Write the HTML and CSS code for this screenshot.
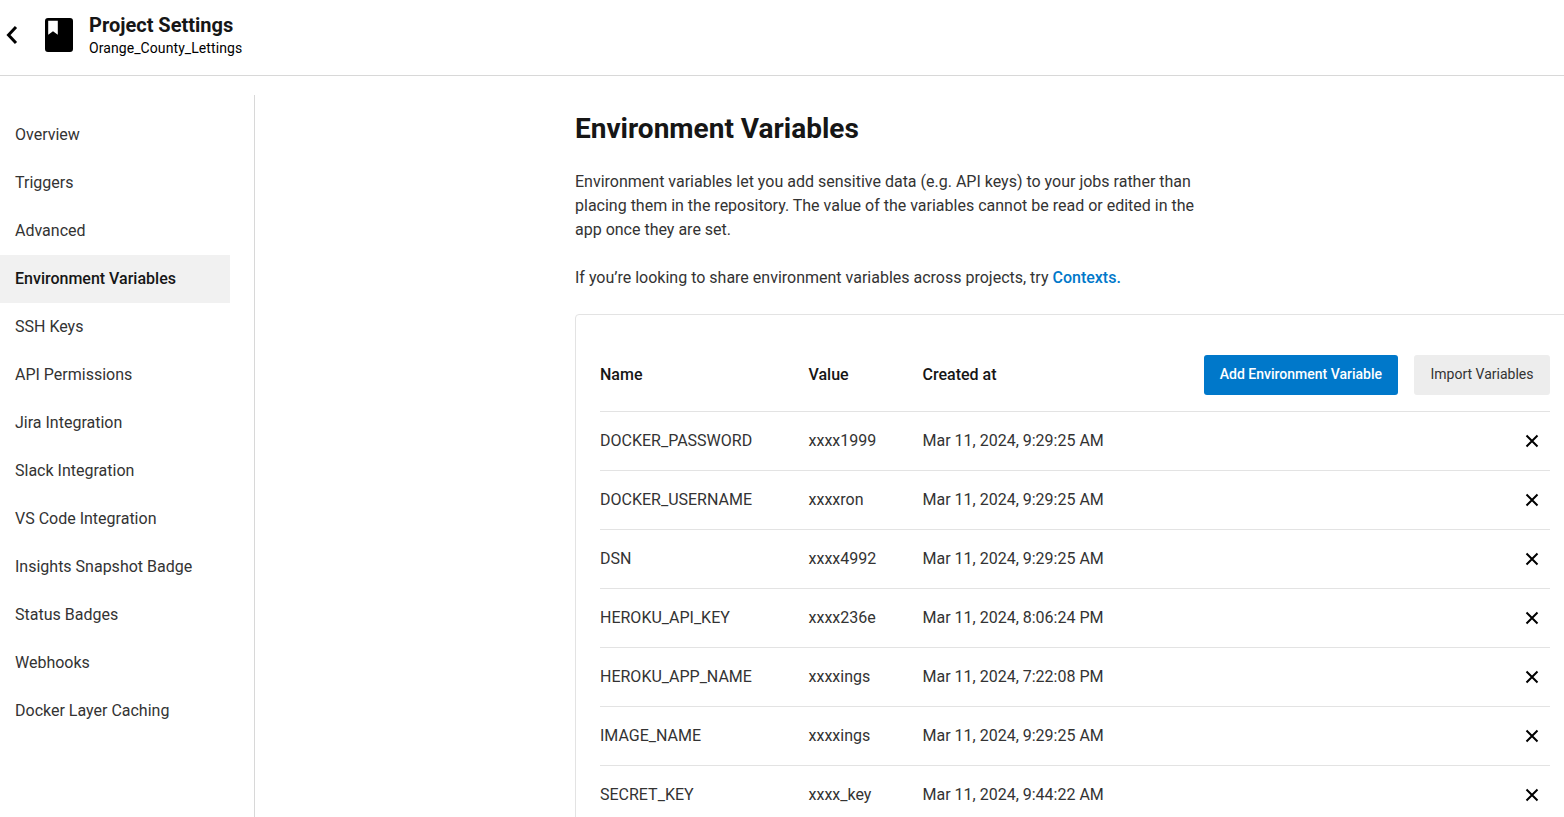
FILE: index.html
```html
<!DOCTYPE html>
<html lang="en">
<head>
    <meta charset="UTF-8">
    <meta name="viewport" content="width=device-width, initial-scale=1.0">
    <title>Project Settings</title>
    <link rel="stylesheet" href="styles.css">
</head>
<body>
    <header class="top-bar">
        <svg class="back-icon" width="14" height="20" viewBox="0 0 14 20"><path d="M11 2 3.5 10 11 18" fill="none" stroke="#000" stroke-width="3"/></svg>
        <svg class="project-icon" width="28" height="34" viewBox="0 0 28 34"><path d="M3 0h22a3 3 0 0 1 3 3v28a3 3 0 0 1-3 3H3a3 3 0 0 1-3-3V3a3 3 0 0 1 3-3ZM3.2 2.7v14l4.8-3.4 4.8 3.4v-14Z" fill="#000" fill-rule="evenodd"/></svg>
        <div class="project-title">
            <h1>Project Settings</h1>
            <div class="project-name">Orange_County_Lettings</div>
        </div>
    </header>

    <div class="page-body">
        <nav class="side-nav">
            <a class="nav-item">Overview</a>
            <a class="nav-item">Triggers</a>
            <a class="nav-item">Advanced</a>
            <a class="nav-item active">Environment Variables</a>
            <a class="nav-item">SSH Keys</a>
            <a class="nav-item">API Permissions</a>
            <a class="nav-item">Jira Integration</a>
            <a class="nav-item">Slack Integration</a>
            <a class="nav-item">VS Code Integration</a>
            <a class="nav-item">Insights Snapshot Badge</a>
            <a class="nav-item">Status Badges</a>
            <a class="nav-item">Webhooks</a>
            <a class="nav-item">Docker Layer Caching</a>
        </nav>

        <main class="content">
            <h2>Environment Variables</h2>
            <p class="intro">Environment variables let you add sensitive data (e.g. API keys) to your jobs rather than placing them in the repository. The value of the variables cannot be read or edited in the app once they are set.</p>
            <p class="intro">If you’re looking to share environment variables across projects, try <a class="link">Contexts.</a></p>

            <section class="var-card">
                <div class="var-head">
                    <span class="col-name">Name</span>
                    <span class="col-value">Value</span>
                    <span class="col-created">Created at</span>
                    <div class="head-buttons">
                        <button class="btn btn-primary">Add Environment Variable</button>
                        <button class="btn btn-secondary">Import Variables</button>
                    </div>
                </div>

                <div class="var-row">
                    <span class="col-name">DOCKER_PASSWORD</span>
                    <span class="col-value">xxxx1999</span>
                    <span class="col-created">Mar 11, 2024, 9:29:25 AM</span>
                    <svg class="del-icon" width="14" height="14" viewBox="0 0 14 14"><path d="M1.5 1.5l11 11M12.5 1.5l-11 11" stroke="#000" stroke-width="2"/></svg>
                </div>
                <div class="var-row">
                    <span class="col-name">DOCKER_USERNAME</span>
                    <span class="col-value">xxxxron</span>
                    <span class="col-created">Mar 11, 2024, 9:29:25 AM</span>
                    <svg class="del-icon" width="14" height="14" viewBox="0 0 14 14"><path d="M1.5 1.5l11 11M12.5 1.5l-11 11" stroke="#000" stroke-width="2"/></svg>
                </div>
                <div class="var-row">
                    <span class="col-name">DSN</span>
                    <span class="col-value">xxxx4992</span>
                    <span class="col-created">Mar 11, 2024, 9:29:25 AM</span>
                    <svg class="del-icon" width="14" height="14" viewBox="0 0 14 14"><path d="M1.5 1.5l11 11M12.5 1.5l-11 11" stroke="#000" stroke-width="2"/></svg>
                </div>
                <div class="var-row">
                    <span class="col-name">HEROKU_API_KEY</span>
                    <span class="col-value">xxxx236e</span>
                    <span class="col-created">Mar 11, 2024, 8:06:24 PM</span>
                    <svg class="del-icon" width="14" height="14" viewBox="0 0 14 14"><path d="M1.5 1.5l11 11M12.5 1.5l-11 11" stroke="#000" stroke-width="2"/></svg>
                </div>
                <div class="var-row">
                    <span class="col-name">HEROKU_APP_NAME</span>
                    <span class="col-value">xxxxings</span>
                    <span class="col-created">Mar 11, 2024, 7:22:08 PM</span>
                    <svg class="del-icon" width="14" height="14" viewBox="0 0 14 14"><path d="M1.5 1.5l11 11M12.5 1.5l-11 11" stroke="#000" stroke-width="2"/></svg>
                </div>
                <div class="var-row">
                    <span class="col-name">IMAGE_NAME</span>
                    <span class="col-value">xxxxings</span>
                    <span class="col-created">Mar 11, 2024, 9:29:25 AM</span>
                    <svg class="del-icon" width="14" height="14" viewBox="0 0 14 14"><path d="M1.5 1.5l11 11M12.5 1.5l-11 11" stroke="#000" stroke-width="2"/></svg>
                </div>
                <div class="var-row">
                    <span class="col-name">SECRET_KEY</span>
                    <span class="col-value">xxxx_key</span>
                    <span class="col-created">Mar 11, 2024, 9:44:22 AM</span>
                    <svg class="del-icon" width="14" height="14" viewBox="0 0 14 14"><path d="M1.5 1.5l11 11M12.5 1.5l-11 11" stroke="#000" stroke-width="2"/></svg>
                </div>
            </section>
        </main>
    </div>
</body>
</html>
```

FILE: styles.css
```css
html, body {
    height: 100%;
}

body {
    margin: 0;
    overflow: hidden;
    background: #fff;
    color: #161616;
    font-family: Roboto, Arial, sans-serif;
    font-size: 16px;
}

.top-bar {
    display: flex;
    align-items: center;
    height: 70px;
    padding-bottom: 5px;
    border-bottom: 1px solid #d8d8d8;
}

.back-icon {
    margin-left: 5px;
}

.project-icon {
    margin-left: 26px;
}

.project-title {
    margin-left: 16px;
    color: #000;
}

.project-title h1 {
    margin: 0;
    font-size: 20px;
    font-weight: 700;
    line-height: 24px;
    color: #161616;
}

.project-name {
    font-size: 14px;
    line-height: 20px;
    margin-top: 1px;
    letter-spacing: 0.08px;
}

.page-body {
    display: flex;
    padding-top: 19px;
}

.side-nav {
    flex: none;
    width: 254px;
    height: 800px;
    padding-top: 16px;
    border-right: 1px solid #d8d8d8;
}

.nav-item {
    display: block;
    width: 230px;
    height: 48px;
    line-height: 48px;
    padding-left: 15px;
    box-sizing: border-box;
    color: #333;
}

.nav-item.active {
    background: #f1f1f1;
    color: #161616;
    font-weight: 500;
}

.content {
    flex: none;
    width: 1309px;
    padding: 16px 0 0 320px;
    box-sizing: border-box;
}

.content h2 {
    margin: 0 0 23px;
    font-size: 28px;
    font-weight: 700;
    line-height: 36px;
    color: #161616;
}

.intro {
    width: 630px;
    margin: 0 0 24px;
    line-height: 24px;
    color: #333;
}

.link {
    color: #0078ca;
    font-weight: 500;
}

.var-card {
    width: 1000px;
    margin-top: 24px;
    padding-left: 24px;
    border: 1px solid #e3e3e3;
    border-radius: 4px;
}

.var-head, .var-row {
    display: flex;
    align-items: center;
    width: 950px;
    border-bottom: 1px solid #e3e3e3;
}

.var-head {
    height: 73px;
    padding-top: 23px;
    font-weight: 500;
    color: #161616;
}

.var-row {
    height: 56px;
    padding-bottom: 2px;
    color: #333;
}

.col-name {
    width: 208.5px;
    flex: none;
}

.col-value {
    width: 114px;
    flex: none;
}

.col-created {
    flex: 1;
}

.head-buttons {
    display: flex;
    gap: 16px;
}

.btn {
    height: 40px;
    padding: 0 16px 2px;
    border: none;
    border-radius: 3px;
    font-family: inherit;
    font-size: 14px;
}

.btn-primary {
    background: #0078ca;
    color: #fff;
    font-weight: 500;
}

.btn-secondary {
    width: 136px;
    padding: 0 0 2px;
    background: #ededed;
    color: #333;
}

.del-icon {
    margin: 2px 11px 0 0;
}
```
